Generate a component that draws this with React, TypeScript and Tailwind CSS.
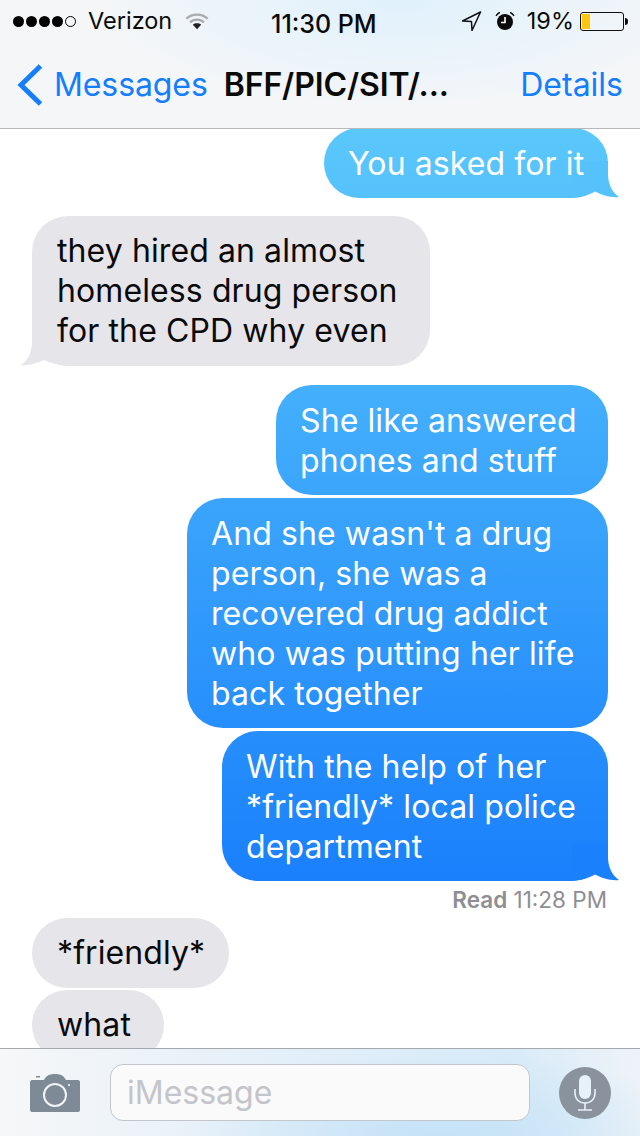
import React from 'react';

const sentBg = 'bg-[linear-gradient(#5ac8fb_130px,#1a80fc_880px)] bg-fixed';

function SentBubble({ width, tail, tailColor, lines, className = '' }: { width: string; tail?: boolean; tailColor?: string; lines: string[]; className?: string }) {
  return (
    <div className={`relative self-end mr-[32px] rounded-[36px] px-[24px] pt-[16px] pb-[14px] text-[32px] leading-[40px] tracking-[0.1px] text-white ${width} ${sentBg} ${className}`}>
      {tail && (
        <svg className="absolute right-[-12px] bottom-0" width="48" height="37" viewBox="0 0 48 37">
          <path d="M20 0H36V13C36 23 40 31 47 36C39 37 30 34 23 30.5C17 34 10 36 0 37V0Z" fill={tailColor} />
        </svg>
      )}
      {lines.map((l) => (
        <div key={l} className="relative whitespace-nowrap">{l}</div>
      ))}
    </div>
  );
}

function ReceivedBubble({ width, tail, lines }: { width: string; tail?: boolean; lines: string[] }) {
  return (
    <div className={`relative self-start ml-[32px] rounded-[36px] bg-[#e5e5ea] px-[25px] pt-[15px] pb-[15px] text-[32px] leading-[40px] tracking-[0.1px] text-[#0a0a0a] ${width}`}>
      {tail && (
        <svg className="absolute left-[-12px] bottom-0" width="48" height="37" viewBox="0 0 48 37">
          <path d="M28 0H12V13C12 23 8 32 1 36C9 37 17 34 24 31C30 34 38 36 48 37V0Z" fill="#e5e5ea" />
        </svg>
      )}
      {lines.map((l) => (
        <div key={l} className="relative whitespace-nowrap">{l}</div>
      ))}
    </div>
  );
}

export default function App() {
  return (
    <div className="flex h-[1136px] w-[640px] flex-col overflow-hidden bg-white font-['Inter','Liberation_Sans',sans-serif]">
      {/* Status bar + nav */}
      <header className="relative z-10 h-[129px] shrink-0 border-b border-[#b6b8bb] bg-[radial-gradient(ellipse_300px_110px_at_400px_0px,#e0f1fc,transparent),linear-gradient(#f4f6f8,#f5f6f8)]">
        <div className="relative flex h-[42px] items-center text-[23.5px] text-[#0a0a0a]">
          <div className="ml-[13px] flex items-center gap-[2px]">
            {[0, 1, 2, 3].map((i) => (
              <span key={i} className="h-[11px] w-[11px] rounded-full bg-black" />
            ))}
            <span className="h-[11px] w-[11px] rounded-full border border-black" />
          </div>
          <span className="ml-[12px]">Verizon</span>
          <svg className="ml-[13px]" width="24" height="20" viewBox="0 0 26 20" fill="none">
            <path d="M1.5 7.5C7.5 1.5 18.5 1.5 24.5 7.5" stroke="#a9abae" strokeWidth="2.5" />
            <path d="M5.5 11.5C9.5 7.5 16.5 7.5 20.5 11.5" stroke="#a9abae" strokeWidth="2.5" />
            <path d="M8.5 14L13 19L17.5 14C15 12 11 12 8.5 14Z" fill="#222" />
          </svg>
          <span className="absolute left-[271px] top-[6px] text-[25px] font-medium">11:30 PM</span>
          <div className="ml-auto mr-[12px] flex items-center">
            <svg width="21" height="20" viewBox="0 0 21 20" fill="none">
              <path d="M19.5 1L1.5 10L10.5 10.5L11 19.5Z" stroke="#111" strokeWidth="1.5" strokeLinejoin="round" />
            </svg>
            <svg className="ml-[13px]" width="20" height="20" viewBox="0 0 20 20">
              <circle cx="10" cy="11" r="8" fill="#0a0a0a" />
              <path d="M10 6V11.5H6" stroke="#fff" strokeWidth="1.6" fill="none" />
              <path d="M1 5C1.5 3 3 1.5 5 1.5ZM19 5C18.5 3 17 1.5 15 1.5Z" fill="#0a0a0a" stroke="#0a0a0a" />
            </svg>
            <span className="ml-[12px]">19%</span>
            <div className="ml-[6px] h-[19px] w-[44px] rounded-[3px] border border-[#111] p-[1px]">
              <div className="h-full w-[8px] bg-[#fcc60c]" />
            </div>
            <div className="ml-[1px] h-[7px] w-[3px] rounded-r-full bg-[#111]" />
          </div>
        </div>
        <nav className="relative flex h-[86px] items-center pb-[1px]">
          <svg className="ml-[17px]" width="26" height="42" viewBox="0 0 26 42" fill="none">
            <path d="M23.5 2L4 21L23.5 40" stroke="#147efb" strokeWidth="5" />
          </svg>
          <span className="ml-[11px] text-[32px] tracking-[-0.1px] text-[#147efb]">Messages</span>
          <span className="ml-[16px] text-[32px] font-semibold tracking-[-0.1px] text-[#0a0a0a]">BFF/PIC/SIT/...</span>
          <span className="ml-auto mr-[17px] text-[32px] text-[#147efb]">Details</span>
        </nav>
      </header>

      {/* Conversation */}
      <main className="flex min-h-0 flex-1 flex-col overflow-hidden bg-white">
        <SentBubble className="-mt-[1px]" width="w-[284px]" tail tailColor="#56c2fb" lines={['You asked for it']} />
        <div className="mt-[18px] flex flex-col">
          <ReceivedBubble width="w-[398px]" tail lines={['they hired an almost', 'homeless drug person', 'for the CPD why even']} />
        </div>
        <div className="mt-[19px] flex flex-col gap-[3px]">
          <SentBubble width="w-[332px]" lines={['She like answered', 'phones and stuff']} />
          <SentBubble width="w-[421px]" lines={['And she wasn\'t a drug', 'person, she was a', 'recovered drug addict', 'who was putting her life', 'back together']} />
          <SentBubble width="w-[386px]" tail tailColor="#1a80fc" lines={['With the help of her', '*friendly* local police', 'department']} />
        </div>
        <div className="mt-[5px] mr-[33px] h-[27px] self-end text-[22.5px] leading-[27px] text-[#8e8e93]">
          <span className="font-semibold">Read</span> 11:28 PM
        </div>
        <div className="mt-[5px] flex shrink-0 flex-col gap-[2px]">
          <ReceivedBubble width="w-[197px]" lines={['*friendly*']} />
          <ReceivedBubble width="w-[132px]" lines={['what']} />
        </div>
      </main>

      {/* Input bar */}
      <footer className="flex h-[88px] shrink-0 items-center border-t border-[#a4a9ad] bg-[radial-gradient(ellipse_260px_90px_at_440px_88px,#c4e2f7,transparent),linear-gradient(90deg,#f6f7f8,#e3eff9_45%,#d9ebf8_80%,#eef3f8)]">
        <svg className="ml-[30px]" width="50" height="38" viewBox="0 0 50 38">
          <path fillRule="evenodd" d="M2 6H14C16 2 19 0 25 0C31 0 34 2 36 6H48C49 6 50 7 50 8V36C50 37 49 38 48 38H2C1 38 0 37 0 36V8C0 7 1 6 2 6ZM25 9A12 12 0 1 0 25 33A12 12 0 1 0 25 9ZM25 11A10 10 0 1 1 25 31A10 10 0 1 1 25 11Z" fill="#7f8a97" />
          <rect x="6" y="2" width="4" height="1.5" fill="#7f8a97" />
          <circle cx="39" cy="11" r="1" fill="#fff" />
        </svg>
        <div className="ml-[30px] flex h-[57px] w-[420px] items-center rounded-[13px] border border-[#c3c6cb] bg-[#fafafb] pl-[16px] text-[32px] text-[#c4c5ca]">
          iMessage
        </div>
        <div className="ml-[29px] flex h-[52px] w-[52px] items-center justify-center rounded-full bg-[#8a929d]">
          <svg width="24" height="36" viewBox="0 0 24 36" fill="none">
            <rect x="6" y="0" width="12" height="24" rx="6" fill="#e6f1f9" />
            <path d="M2 14V18C2 24 6 28 12 28C18 28 22 24 22 18V14" stroke="#e6f1f9" strokeWidth="1.6" />
            <path d="M12 28V35M5 35H19" stroke="#e6f1f9" strokeWidth="1.6" />
          </svg>
        </div>
      </footer>
    </div>
  );
}
